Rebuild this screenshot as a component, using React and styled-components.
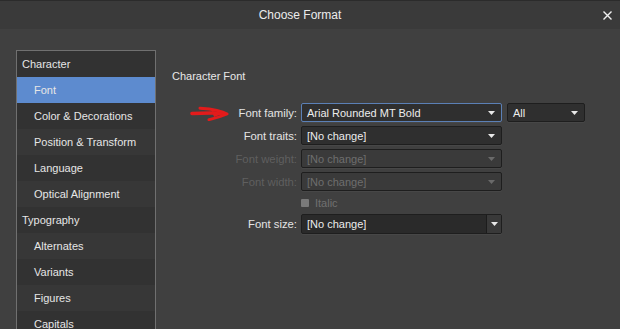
import React from "react";
import styled, { createGlobalStyle, css } from "styled-components";

const Global = createGlobalStyle`
  html, body { margin: 0; padding: 0; background: #404040; }
  body { font-family: "Liberation Sans", Arial, sans-serif; font-size: 11px; color: #e4e4e4; }
  * { box-sizing: border-box; }
`;

const Window = styled.div`
  width: 620px;
  height: 329px;
  overflow: hidden;
  display: flex;
  flex-direction: column;
  background: #404040;
`;

const TitleBar = styled.div`
  height: 29px;
  flex: none;
  border-top: 1px solid #2b2b2b;
  background: #3a3a3a;
  display: grid;
  grid-template-columns: 1fr auto 1fr;
  align-items: center;
  padding: 0 8px 0 0;
`;

const Title = styled.div`
  grid-column: 2;
  font-size: 12px;
  color: #ececec;
  margin-right: 12px;
`;

const CloseBtn = styled.div`
  grid-column: 3;
  justify-self: end;
  display: flex;
  align-items: center;
  width: 9px;
  height: 9px;
`;

const Body = styled.div`
  flex: 1;
  display: flex;
  padding: 21px 0 0 16px;
  min-height: 0;
`;

const Sidebar = styled.div`
  width: 140px;
  flex: none;
  border: 1px solid #707070;
  border-bottom: none;
  background: #333333;
  display: flex;
  flex-direction: column;
`;

const NavItem = styled.div`
  height: 26px;
  flex: none;
  display: flex;
  align-items: center;
  padding-left: ${(p) => (p.$header ? 5 : 17)}px;
  color: #e6e6e6;
  background: ${(p) => (p.$selected ? "#5d8bcf" : p.$alt ? "#373737" : "#323232")};
`;

const Main = styled.div`
  flex: 1;
  padding-left: 16px;
  display: flex;
  flex-direction: column;
`;

const Heading = styled.div`
  margin-top: 18px;
  height: 16px;
  line-height: 16px;
  font-size: 11px;
  color: #e8e8e8;
`;

const Form = styled.div`
  margin-top: 19px;
  display: grid;
  grid-template-columns: 125px 201px auto;
  column-gap: 4px;
  row-gap: 4px;
  align-items: center;
`;

const Label = styled.div`
  grid-column: 1;
  display: flex;
  justify-content: flex-end;
  align-items: center;
  gap: 9px;
  font-size: 11.3px;
  color: ${(p) => (p.$disabled ? "#5f5f5f" : "#e4e4e4")};
  white-space: nowrap;
`;

const Combo = styled.div`
  height: ${(p) => (p.$tall ? 20 : 19)}px;
  width: ${(p) => p.$w || 201}px;
  display: flex;
  align-items: center;
  border-radius: 2px;
  border: 1px solid ${(p) => (p.$focus ? "#5b80b6" : "#1e1e1e")};
  background: ${(p) => (p.$disabled ? "#3a3a3a" : "#2f2f2f")};
  color: ${(p) => (p.$disabled ? "#6e6e6e" : "#ececec")};
  box-shadow: 0 1px 0 rgba(255, 255, 255, 0.04);
  ${(p) =>
    p.$extra &&
    css`
      margin-left: 1px;
    `}
`;

const ComboText = styled.div`
  flex: 1;
  padding-left: 5px;
  white-space: nowrap;
  overflow: hidden;
`;

const ArrowBox = styled.div`
  width: 14px;
  height: 100%;
  flex: none;
  display: flex;
  align-items: center;
  justify-content: flex-start;
  padding-left: 1px;
  ${(p) =>
    p.$button &&
    css`
      border-left: 1px solid #1c1c1c;
      background: #393939;
      width: 15px;
      padding-left: 4px;
    `}
`;

const FieldCombo = styled(Combo)`
  background: #2a2a2a;
`;

const CheckRow = styled.div`
  grid-column: 2;
  height: 15px;
  display: flex;
  align-items: center;
  gap: 6px;
  padding-left: 0;
  color: #707070;
`;

const CheckBox = styled.span`
  width: 8px;
  height: 8px;
  background: #7a7a7a;
  border-radius: 1px;
  display: inline-block;
`;

const Caret = ({ color = "#e8e8e8" }) => (
  <svg width="7" height="4" viewBox="0 0 7 4">
    <path d="M0 0 H7 L3.5 4 Z" fill={color} />
  </svg>
);

const RedArrow = () => (
  <svg width="40" height="16" viewBox="0 0 40 16" style={{ display: "block" }}>
    <path
      d="M2 8.5 Q 18 7.6 33 8.2"
      stroke="#e31b1b"
      strokeWidth="3.6"
      strokeLinecap="round"
      fill="none"
    />
    <path
      d="M10 3.2 Q 30 4.5 37 9 Q 29 12.5 19 14.6"
      stroke="#e31b1b"
      strokeWidth="3"
      strokeLinecap="round"
      strokeLinejoin="round"
      fill="none"
    />
    <path d="M22 6 L34 8.6 L24 12 Z" fill="#e31b1b" />
  </svg>
);

const navItems = [
  { label: "Character", header: true },
  { label: "Font", selected: true },
  { label: "Color & Decorations" },
  { label: "Position & Transform" },
  { label: "Language" },
  { label: "Optical Alignment" },
  { label: "Typography", header: true },
  { label: "Alternates" },
  { label: "Variants" },
  { label: "Figures" },
  { label: "Capitals" },
];

export default function App() {
  return (
    <>
      <Global />
      <Window>
        <TitleBar>
          <Title>Choose Format</Title>
          <CloseBtn>
            <svg width="9" height="9" viewBox="0 0 9 9">
              <path d="M0.5 0.5 L8.5 8.5 M8.5 0.5 L0.5 8.5" stroke="#f0f0f0" strokeWidth="1.4" />
            </svg>
          </CloseBtn>
        </TitleBar>
        <Body>
          <Sidebar>
            {navItems.map((it, i) => (
              <NavItem
                key={it.label}
                $header={it.header}
                $selected={it.selected}
                $alt={i % 2 === 1}
              >
                {it.label}
              </NavItem>
            ))}
          </Sidebar>
          <Main>
            <Heading>Character Font</Heading>
            <Form>
              <Label>
                <RedArrow />
                Font family:
              </Label>
              <Combo $focus>
                <ComboText>Arial Rounded MT Bold</ComboText>
                <ArrowBox>
                  <Caret />
                </ArrowBox>
              </Combo>
              <Combo $w={78} $extra>
                <ComboText>All</ComboText>
                <ArrowBox>
                  <Caret />
                </ArrowBox>
              </Combo>

              <Label>Font traits:</Label>
              <Combo>
                <ComboText>[No change]</ComboText>
                <ArrowBox>
                  <Caret />
                </ArrowBox>
              </Combo>
              <span />

              <Label $disabled>Font weight:</Label>
              <Combo $disabled>
                <ComboText>[No change]</ComboText>
                <ArrowBox>
                  <Caret color="#6a6a6a" />
                </ArrowBox>
              </Combo>
              <span />

              <Label $disabled>Font width:</Label>
              <Combo $disabled>
                <ComboText>[No change]</ComboText>
                <ArrowBox>
                  <Caret color="#6a6a6a" />
                </ArrowBox>
              </Combo>
              <span />

              <CheckRow>
                <CheckBox />
                Italic
              </CheckRow>
              <span />

              <Label>Font size:</Label>
              <FieldCombo $tall>
                <ComboText>[No change]</ComboText>
                <ArrowBox $button>
                  <Caret />
                </ArrowBox>
              </FieldCombo>
              <span />
            </Form>
          </Main>
        </Body>
      </Window>
    </>
  );
}
